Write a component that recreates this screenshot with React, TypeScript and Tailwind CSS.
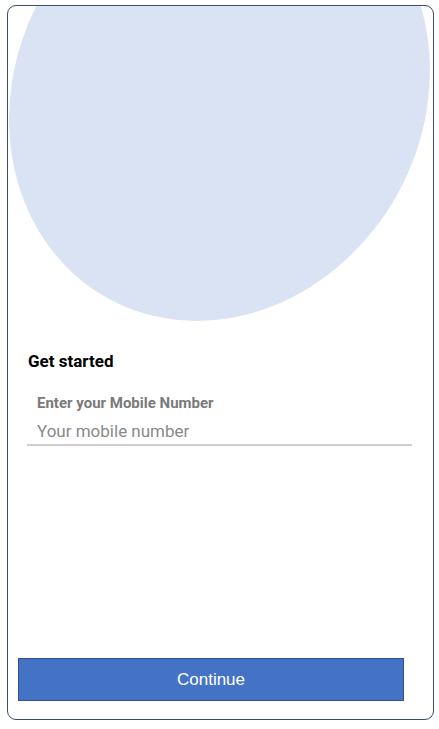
import React from "react";

export default function App() {
  return (
    <div className="pt-[5px] pl-[7px] bg-white min-h-[729px]" style={{ fontFamily: "Roboto, 'Liberation Sans', sans-serif" }}>
      <div className="w-[427px] h-[715px] border border-[#3a4d6b] rounded-[9px] overflow-hidden flex flex-col bg-white">
        <div className="h-[330px] shrink-0">
          <svg width="425" height="330" viewBox="0 0 425 330" className="block">
            <ellipse cx="211.5" cy="89" rx="203.7" ry="232" fill="#dae3f3" transform="rotate(28.4 211.5 89)" />
          </svg>
        </div>
        <div className="mt-[13px] pl-[20px] text-[17px] leading-[24px] font-bold text-black">Get started</div>
        <div className="mt-[20px] ml-[19px] w-[385px] border-b-2 border-[#cfcfcf] pl-[10px]">
          <div className="text-[15px] leading-[20px] font-bold text-[#7a7a7a]">Enter your Mobile Number</div>
          <input
            className="mt-[5px] block w-full h-[26px] text-[17px] leading-[24px] outline-none bg-transparent placeholder:text-[#8a8a8a] text-[#333]"
            placeholder="Your mobile number"
            style={{ fontFamily: "Roboto, 'Liberation Sans', sans-serif" }}
          />
        </div>
        <div className="mt-auto mb-[18px] ml-[10px]">
          <button
            className="w-[386px] h-[43px] bg-[#4472c4] border border-[#2f528f] text-white text-[17px]"
            style={{ fontFamily: "'Liberation Sans', Arial, sans-serif" }}
          >
            Continue
          </button>
        </div>
      </div>
    </div>
  );
}
